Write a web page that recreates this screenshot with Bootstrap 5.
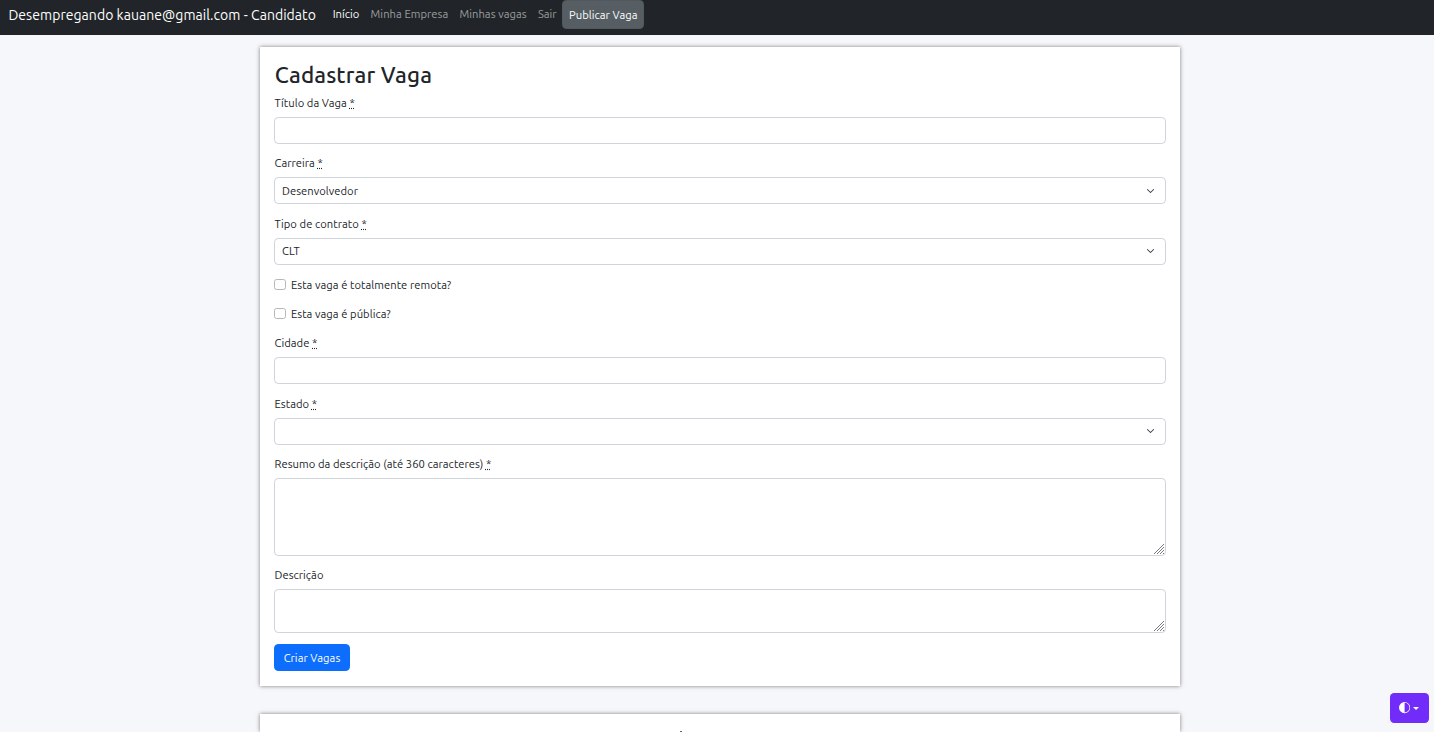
<!DOCTYPE html>
<html lang="pt-BR">
<head>
<meta charset="utf-8">
<meta name="viewport" content="width=device-width, initial-scale=1">
<title>Cadastrar Vaga</title>
<link href="https://cdn.jsdelivr.net/npm/bootstrap@5.3.0/dist/css/bootstrap.min.css" rel="stylesheet">
<style>
  html { font-size: 11.2px; }
  body { font-family: "Ubuntu", "Noto Sans", sans-serif; font-size: 11.2px; line-height: 16.8px; letter-spacing: .05px; background: #f5f7fb; height: 100vh; overflow: hidden; }
  main { height: calc(100vh - 35px); overflow: hidden; }
  .topbar { height: 35px; background: #212529; }
  .topbar .navbar-brand { font-size: 14px; line-height: 21px; padding: 4.5px 0; margin-right: 11.2px; white-space: nowrap; }
  .topbar .nav-link { font-size: 11.2px; padding: 5.6px; line-height: 16.8px; }
  .topbar .btn-publish { height: 29px; border-radius: 4.2px; background: #565e64; border: 1px solid #51585e; color: #fff; font-size: 11.2px; padding: 0; width: 82px; line-height: 28px; letter-spacing: inherit; }
  .panel { width: 919.6px; margin-left: 260.3px; background: #fff; box-shadow: 0 0 4px rgba(0,0,0,.5); }
  .panel-form { margin-top: 12.3px; height: 638.4px; padding: 14px 13.8px 0 13.7px; }
  .panel-next { margin-top: 28.8px; height: 18px; position: relative; }
  .panel h2 { font-size: 22.4px; font-weight: 500; line-height: 27px; letter-spacing: .12px; margin: 0 0 6.1px .8px; }
  .form-label { display: block; margin: 0 0 5.2px .5px; padding-top: .4px; line-height: 16.8px; }
  .field { margin-bottom: 11.1px; }
  .form-control, .form-select { height: 27px; border: 1px solid #ced4da; border-radius: 4.2px; font-size: 11.2px; line-height: 16.8px; padding: 4.6px 7px 3.6px; background-color: #fff; letter-spacing: inherit; }
  .form-select { background-size: 11.2px 8.4px; background-position: right 9px center; }
  textarea.form-control { resize: none; background: #fff url("data:image/svg+xml,%3Csvg xmlns='http://www.w3.org/2000/svg' width='12' height='12' stroke='%23555' stroke-width='1' stroke-dasharray='1.1 .35'%3E%3Cpath d='M1 11L11 1M4 11L11 4M7 11L11 7M10 11L11 10'/%3E%3C/svg%3E") no-repeat right 0 bottom 0; }
  textarea.summary { height: 78px; min-height: 0; margin-bottom: -.5px; }
  textarea.details { height: 44px; min-height: 0; }
  .form-check { min-height: 18px; margin: 0 0 10.6px; padding: 0; display: flex; }
  .form-check + .field { padding-top: .5px; }
  .form-check .form-check-input { float: none; width: 11.6px; height: 11.2px; margin: 2.8px 5.4px 0 0; border: 1px solid #b5b7b9; border-radius: 2.6px; }
  .form-check-label { line-height: 18.6px; }
  .btn-create { width: 76px; height: 27px; padding: 0; font-size: 11.2px; border-radius: 4.2px; line-height: 26px; letter-spacing: inherit; }
  .theme-toggle { right: 5px; bottom: 9px; width: 39px; height: 30px; padding: 0 1px 0 0; border-radius: 4.2px; background: #712cf9; color: #fff; display: flex; align-items: center; justify-content: center; gap: 3px; }
  .theme-toggle:hover { background: #6528e0; color: #fff; }
  .theme-toggle::after { margin: 0; border-width: 3.4px 3.4px 0; }
  .accent-tip { left: 420px; top: 17px; width: 2px; height: 1px; background: #666; }
</style>
</head>
<body>
<nav class="navbar navbar-expand navbar-dark topbar p-0 align-items-start">
  <div class="container-fluid justify-content-start align-items-start">
    <a class="navbar-brand" href="#">Desempregando kauane@gmail.com - Candidato</a>
    <ul class="navbar-nav">
      <li class="nav-item"><a class="nav-link active" href="#">Início</a></li>
      <li class="nav-item"><a class="nav-link" href="#">Minha Empresa</a></li>
      <li class="nav-item"><a class="nav-link" href="#">Minhas vagas</a></li>
      <li class="nav-item"><a class="nav-link" href="#">Sair</a></li>
      <li class="nav-item"><a class="btn btn-publish" href="#">Publicar Vaga</a></li>
    </ul>
  </div>
</nav>
<main>
  <section class="panel panel-form">
    <h2>Cadastrar Vaga</h2>
    <form>
      <div class="field">
        <label class="form-label" for="titulo">Título da Vaga <abbr title="obrigatório">*</abbr></label>
        <input class="form-control" id="titulo" type="text">
      </div>
      <div class="field">
        <label class="form-label" for="carreira">Carreira <abbr title="obrigatório">*</abbr></label>
        <select class="form-select" id="carreira"><option>Desenvolvedor</option></select>
      </div>
      <div class="field">
        <label class="form-label" for="contrato">Tipo de contrato <abbr title="obrigatório">*</abbr></label>
        <select class="form-select" id="contrato"><option>CLT</option></select>
      </div>
      <div class="form-check"><input class="form-check-input" type="checkbox" id="remota"><label class="form-check-label" for="remota">Esta vaga é totalmente remota?</label></div>
      <div class="form-check"><input class="form-check-input" type="checkbox" id="publica"><label class="form-check-label" for="publica">Esta vaga é pública?</label></div>
      <div class="field">
        <label class="form-label" for="cidade">Cidade <abbr title="obrigatório">*</abbr></label>
        <input class="form-control" id="cidade" type="text">
      </div>
      <div class="field">
        <label class="form-label" for="estado">Estado <abbr title="obrigatório">*</abbr></label>
        <select class="form-select" id="estado"><option></option></select>
      </div>
      <div class="field">
        <label class="form-label" for="resumo">Resumo da descrição (até 360 caracteres) <abbr title="obrigatório">*</abbr></label>
        <textarea class="form-control summary" id="resumo"></textarea>
      </div>
      <div class="field">
        <label class="form-label" for="descricao">Descrição</label>
        <textarea class="form-control details" id="descricao"></textarea>
      </div>
      <button class="btn btn-primary btn-create" type="button">Criar Vagas</button>
    </form>
  </section>
  <section class="panel panel-next"><span class="accent-tip position-absolute"></span></section>
</main>
<button class="btn theme-toggle dropdown-toggle position-fixed" type="button" aria-label="Alternar tema">
  <svg width="11.2" height="11.2" viewBox="0 0 16 16" fill="currentColor"><path d="M8 15A7 7 0 1 0 8 1v14zm0 1A8 8 0 1 1 8 0a8 8 0 0 1 0 16z"/></svg>
</button>
<script src="https://cdn.jsdelivr.net/npm/bootstrap@5.3.0/dist/js/bootstrap.bundle.min.js"></script>
</body>
</html>
